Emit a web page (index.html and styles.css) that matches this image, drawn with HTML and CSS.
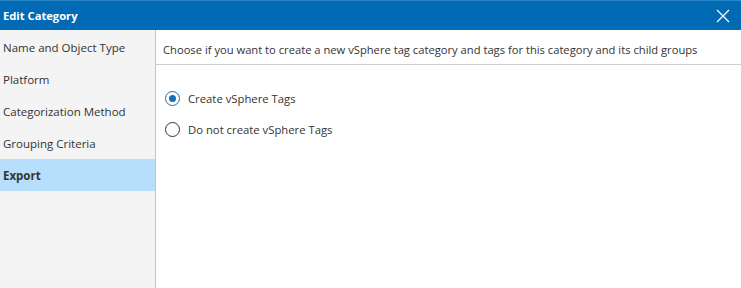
FILE: index.html
```html
<!DOCTYPE html>
<html lang="en">
<head>
    <meta charset="UTF-8">
    <title>Edit Category</title>
    <link rel="stylesheet" href="styles.css">
</head>
<body>
    <div class="dialog">
        <div class="title-bar">
            <span class="title">Edit Category</span>
            <button class="close-btn" aria-label="Close">
                <svg width="14" height="14" viewBox="0 0 14 14">
                    <path d="M1 1 L13 13 M13 1 L1 13" stroke="#fff" stroke-width="1.2" fill="none"/>
                </svg>
            </button>
        </div>
        <div class="dialog-body">
            <ul class="steps">
                <li class="step">Name and Object Type</li>
                <li class="step">Platform</li>
                <li class="step">Categorization Method</li>
                <li class="step">Grouping Criteria</li>
                <li class="step active">Export</li>
            </ul>
            <div class="content">
                <div class="content-header">
                    Choose if you want to create a new vSphere tag category and tags for this category and its child groups
                </div>
                <div class="options">
                    <label class="option">
                        <input type="radio" name="tags" checked>
                        <span class="radio"></span>
                        Create vSphere Tags
                    </label>
                    <label class="option">
                        <input type="radio" name="tags">
                        <span class="radio"></span>
                        Do not create vSphere Tags
                    </label>
                </div>
            </div>
        </div>
    </div>
</body>
</html>
```

FILE: styles.css
```css
* {
    margin: 0;
    padding: 0;
    box-sizing: border-box;
}

body {
    font-family: 'Open Sans', 'Noto Sans', sans-serif;
    font-size: 11.5px;
    color: #333;
    background: #fff;
    width: 741px;
    height: 288px;
    overflow: hidden;
}

.dialog {
    display: flex;
    flex-direction: column;
    height: 288px;
}

.title-bar {
    height: 30px;
    background: #006bb4;
    border-top: 1px solid #2a86c6;
    display: flex;
    align-items: center;
    justify-content: space-between;
    padding: 0 11px 0 3px;
    color: #fff;
}

.title {
    font-weight: bold;
    font-size: 11.2px;
}

.close-btn {
    background: none;
    border: none;
    display: flex;
    cursor: pointer;
}

.dialog-body {
    flex: 1;
    display: flex;
}

.steps {
    list-style: none;
    width: 156px;
    background: #f4f4f4;
    border-right: 1px solid #c6c6c6;
    padding-top: 1px;
}

.step {
    height: 32px;
    line-height: 33px;
    padding-left: 3px;
    color: #333;
}

.step.active {
    background: #b7dffb;
    font-weight: bold;
}

.content {
    flex: 1;
}

.content-header {
    height: 35px;
    line-height: 40px;
    padding-left: 7px;
    border-bottom: 1px solid #cfcfcf;
    font-size: 11.2px;
    white-space: nowrap;
}

.options {
    display: flex;
    flex-direction: column;
    gap: 11px;
    padding: 23px 0 0 9px;
}

.option {
    display: flex;
    align-items: center;
    gap: 8px;
    height: 20px;
    font-size: 11.3px;
}

.option input {
    display: none;
}

.radio {
    width: 15px;
    height: 15px;
    border: 1px solid #333;
    border-radius: 50%;
    display: flex;
    align-items: center;
    justify-content: center;
}

.option input:checked + .radio {
    border-color: #1a6fb5;
}

.option input:checked + .radio::after {
    content: "";
    width: 7px;
    height: 7px;
    border-radius: 50%;
    background: #1a6fb5;
}
```
